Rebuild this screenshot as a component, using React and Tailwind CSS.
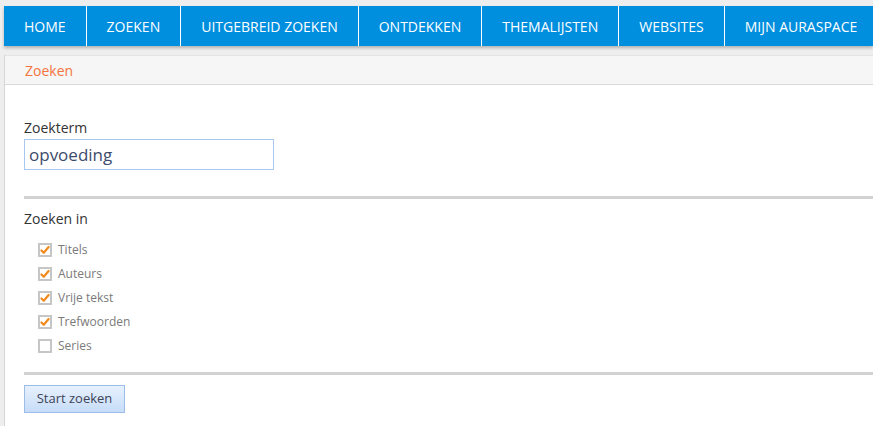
import React from "react";

const NAV = ["HOME", "ZOEKEN", "UITGEBREID ZOEKEN", "ONTDEKKEN", "THEMALIJSTEN", "WEBSITES", "MIJN AURASPACE"];

const FIELDS = [
    { label: "Titels", checked: true },
    { label: "Auteurs", checked: true },
    { label: "Vrije tekst", checked: true },
    { label: "Trefwoorden", checked: true },
    { label: "Series", checked: false },
];

function Box({ checked }) {
    return (
        <span className="w-[14px] h-[14px] border-2 border-[#c6c6c6] bg-white flex items-center justify-center shrink-0">
            {checked && (
                <svg width="10" height="10" viewBox="0 0 10 10" fill="none" stroke="#f28a1c" strokeWidth="2.2" strokeLinecap="round" strokeLinejoin="round">
                    <path d="M1.5 5.5l2.3 2.3L8.6 2" />
                </svg>
            )}
        </span>
    );
}

export default function App() {
    return (
        <div className="min-h-[426px] bg-[#eeeeee] pt-[6px] pl-[4px] overflow-hidden" style={{ fontFamily: '"Open Sans", "Noto Sans", sans-serif' }}>
            <nav className="flex h-[40px] bg-[#008ede] shadow-[0_2px_3px_rgba(0,0,0,0.25)]">
                {NAV.map((item, i) => (
                    <div
                        key={item}
                        className={`flex items-center px-5 text-white text-[14px] whitespace-nowrap ${i > 0 ? "border-l border-white" : ""}`}
                    >
                        {item}
                    </div>
                ))}
            </nav>

            <div className="mt-[9px] bg-white border-l border-[#d6d6d6] min-h-[371px]">
                <div className="h-[30px] bg-[#f6f6f6] border-b border-[#d9d9d9] border-t border-t-[#e4e4e4] flex items-center pl-[20px] text-[14px] text-[#f47440]">
                    Zoeken
                </div>

                <div className="pl-[19px] pt-[34px]">
                    <div className="text-[14px] text-[#333] leading-[18px]">Zoekterm</div>
                    <div className="mt-[2px] w-[250px] h-[31px] border border-[#a9c8f0] flex items-center px-[4px] text-[17px] text-[#3d4b6b]">
                        opvoeding
                    </div>

                    <div className="mt-[26px] h-[3px] bg-[#d2d2d2]"></div>

                    <div className="mt-[11px] text-[14px] text-[#333] leading-[18px]">Zoeken in</div>

                    <div className="mt-[15px] pl-[14px] flex flex-col gap-[10px]">
                        {FIELDS.map((f) => (
                            <label key={f.label} className="flex items-center gap-[6px] h-[14px] text-[12px] text-[#7a7a7a]">
                                <Box checked={f.checked} />
                                {f.label}
                            </label>
                        ))}
                    </div>

                    <div className="mt-[19px] h-[3px] bg-[#d2d2d2]"></div>

                    <button className="mt-[10px] w-[101px] h-[28px] border border-[#9dbde9] bg-gradient-to-b from-[#e7f1fd] via-[#d7e7fb] to-[#c6dcf8] text-[13px] text-[#3d4455]">
                        Start zoeken
                    </button>
                </div>
            </div>
        </div>
    );
}
